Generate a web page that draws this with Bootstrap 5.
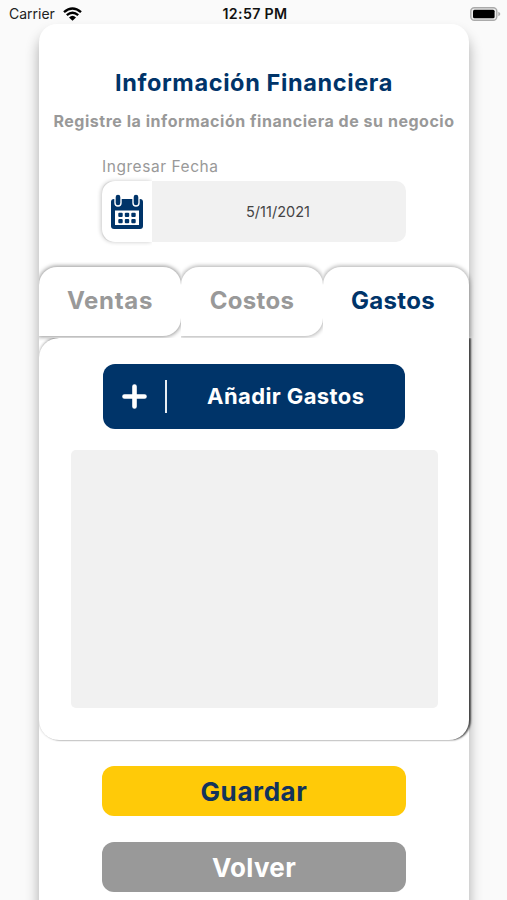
<!DOCTYPE html>
<html lang="es">
<head>
<meta charset="utf-8">
<meta name="viewport" content="width=device-width, initial-scale=1">
<title>Información Financiera</title>
<link href="https://cdn.jsdelivr.net/npm/bootstrap@5.3.0/dist/css/bootstrap.min.css" rel="stylesheet">
<style>
  :root { --navy: #003469; --muted: #999; }
  body { height: 900px; background: #fafafa; font-family: Inter, "Open Sans", sans-serif; }
  .status { height: 24px; padding: 4px 6px 0 9px; font-size: 14px; line-height: 20px; color: #222; }
  .status .clock { font-weight: 600; font-size: 14.2px; color: #111; letter-spacing: .35px; }
  .sheet { width: 430px; height: 900px; margin-left: 39px; padding-top: 43px; background: #fff; border-radius: 18px; box-shadow: 0 10px 14px rgba(0,0,0,.32); }
  .title { font-size: 23.5px; line-height: 32px; font-weight: 700; color: var(--navy); letter-spacing: .62px; }
  .subtitle { font-size: 16px; line-height: 20px; margin-top: 12px; font-weight: 700; color: var(--muted); letter-spacing: .53px; }
  .date-block { width: 304px; margin-top: 26px; }
  .date-label { font-size: 15.5px; line-height: 20px; color: var(--muted); letter-spacing: .55px; }
  .date-field { height: 61px; margin-top: 4px; background: #f1f1f1; border-radius: 10px; }
  .date-icon { width: 50px; background: #fff; border-radius: 13px 0 0 13px; box-shadow: -1px 0 4px rgba(0,0,0,.22); clip-path: inset(-5px 0 -5px -6px); }
  .date-value { font-size: 14.5px; color: #444; letter-spacing: .02px; padding-right: 2px; }
  .tabs { height: 71px; margin-top: 25px; }
  .tab-item { width: 142px; height: 69px; padding: 0 0 2px; border: 0; background: #fff; border-radius: 18px 18px 18px 0; color: var(--muted); font-size: 24px; font-weight: 700; letter-spacing: .3px; box-shadow: 0 0 4px 1px rgba(0,0,0,.33); clip-path: inset(-5px 0 -5px 0); }
  .tab-item.wide { letter-spacing: .7px; box-shadow: 0 0 4px 1px rgba(0,0,0,.42); }
  .tab-item.current { width: 146px; height: 71px; padding: 0 6px 4px 0; color: var(--navy); border-radius: 18px 18px 0 0; clip-path: inset(-5px -5px 0 0); }
  .panel { height: 402px; padding-top: 26px; background: #fff; border-radius: 20px 0 20px 20px; box-shadow: 2px 0 2px rgba(0,0,0,.65), 0 -1px 3px rgba(0,0,0,.3); clip-path: inset(0 -5px -4px 0); }
  .add-btn { width: 302px; height: 65px; border: 0; background: var(--navy); color: #fff; border-radius: 12px; padding: 0 0 0 19px; font-size: 22px; font-weight: 700; letter-spacing: .4px; }
  .divider { width: 1.5px; height: 33px; margin-left: 18px; background: #e7edf3; }
  .entries { width: 367px; height: 258px; margin-top: 21px; background: #f1f1f1; border-radius: 5px; }
  .action { width: 304px; height: 50px; padding: 0; border: 0; border-radius: 12px; font-size: 26px; font-weight: 700; letter-spacing: .6px; }
  .save { margin-top: 26px; background: #ffca08; color: #12335c; }
  .back { margin-top: 26px; background: var(--muted); color: #fff; letter-spacing: .3px; }
</style>
</head>
<body class="overflow-hidden">
  <header class="status row g-0 align-items-center">
    <div class="col d-flex align-items-center">
      <span>Carrier</span>
      <svg class="ms-2" width="19" height="14" viewBox="0 0 19 14" fill="none" stroke="#000" stroke-width="2.4"><path d="M1 5.2Q9.500-2.200 18 5.200M3.800 8.200Q9.500 3.300 15.200 8.200"/><path d="M6 10.400Q9.500 7.200 13 10.400L9.500 13.800Z" fill="#000" stroke="none"/></svg>
    </div>
    <div class="col-auto clock">12:57 PM</div>
    <div class="col d-flex justify-content-end">
      <svg width="31" height="14" viewBox="0 0 31 14"><rect x=".8" y=".8" width="26" height="12.400" rx="3.500" fill="#eee" stroke="#aaa" stroke-width="1.400"/><rect x="3" y="2.800" width="21.600" height="8.400" rx="1.500" fill="#000"/><path d="M28.300 4.700Q30.300 5.500 30.300 7T28.300 9.300Z" fill="#aaa"/></svg>
    </div>
  </header>

  <main class="sheet">
    <h1 class="title text-center mb-0">Información Financiera</h1>
    <p class="subtitle text-center text-nowrap mb-0">Registre la información financiera de su negocio</p>

    <div class="date-block mx-auto">
      <div class="date-label">Ingresar Fecha</div>
      <div class="date-field d-flex">
        <div class="date-icon d-flex align-items-center justify-content-center">
          <svg width="34" height="36" viewBox="0 0 34 36"><path d="M1 8q0-3 3-3h26q3 0 3 3v24q0 3-3 3H4q-3 0-3-3Z" fill="#003469"/><path d="M5 16.500h24v14.500H5Z" fill="#fff"/><g stroke-linecap="round"><path d="M8 3v6M26 3v6" stroke="#fff" stroke-width="7.400"/><path d="M8 3v6M26 3v6" stroke="#003469" stroke-width="4.600"/></g><g fill="#003469"><rect x="8.300" y="18.800" width="4.400" height="4.200" rx="1"/><rect x="14.800" y="18.800" width="4.400" height="4.200" rx="1"/><rect x="21.300" y="18.800" width="4.400" height="4.200" rx="1"/><rect x="8.300" y="25" width="4.400" height="4.200" rx="1"/><rect x="14.800" y="25" width="4.400" height="4.200" rx="1"/><rect x="21.300" y="25" width="4.400" height="4.200" rx="1"/></g></svg>
        </div>
        <div class="date-value flex-grow-1 d-flex align-items-center justify-content-center">5/11/2021</div>
      </div>
    </div>

    <nav class="tabs d-flex">
      <button class="tab-item wide">Ventas</button>
      <button class="tab-item">Costos</button>
      <button class="tab-item current">Gastos</button>
    </nav>
    <section class="panel">
      <button class="add-btn d-flex align-items-center mx-auto">
        <svg width="25" height="25" viewBox="0 0 25 25"><path d="M12.500 2.500v20M2.500 12.500h20" stroke="#fff" stroke-width="4.600" stroke-linecap="round"/></svg>
        <span class="divider"></span>
        <span class="flex-grow-1 text-center">Añadir Gastos</span>
      </button>
      <div class="entries mx-auto"></div>
    </section>

    <button class="action save d-block mx-auto">Guardar</button>
    <button class="action back d-block mx-auto">Volver</button>
  </main>
<script src="https://cdn.jsdelivr.net/npm/bootstrap@5.3.0/dist/js/bootstrap.bundle.min.js"></script>
</body>
</html>
